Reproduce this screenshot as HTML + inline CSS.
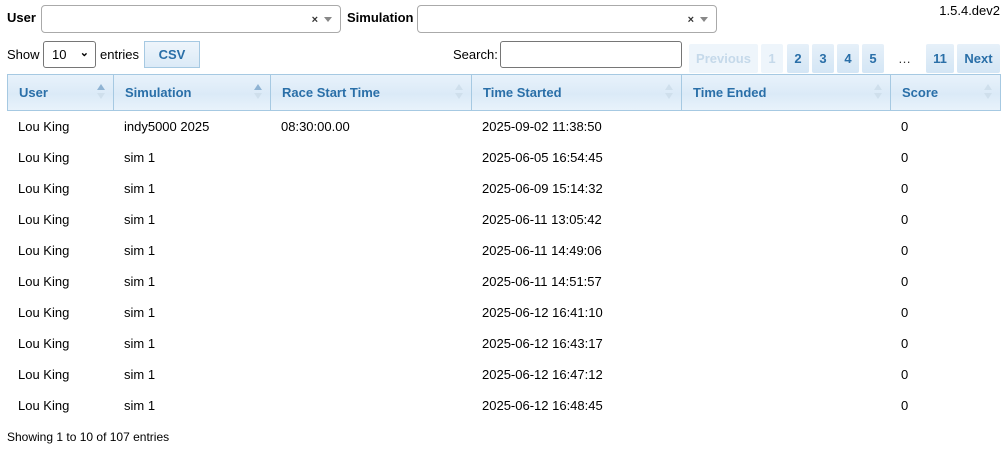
<!DOCTYPE html>
<html><head><style>
*{box-sizing:border-box}
body{margin:0;width:1006px;height:452px;background:#fff;font-family:"Liberation Sans",Arial,sans-serif;font-size:13px;color:#000;position:relative;overflow:hidden}
.a{position:absolute}
.lbl{font-weight:bold;font-size:13px}
.sel{border:1px solid #aaa;border-radius:4px;background:#fff;height:28px}
.sel .x{position:absolute;right:22px;top:8px;font-size:11px;font-weight:bold;color:#333}
.sel .ar{position:absolute;right:8px;top:11px;width:0;height:0;border-left:4px solid transparent;border-right:4px solid transparent;border-top:5px solid #888}
.btn{background:linear-gradient(#eef5fb,#dbeaf7);border:1px solid #a6c9e2;color:#2a6fa8;font-weight:bold;text-align:center}
.pg{background:linear-gradient(#e6f0f9,#d4e6f5);color:#2a6fa8;font-weight:bold;text-align:center;line-height:29px;height:29px;top:44px;border-radius:2px}
.pg.d{background:#eef5fb;color:#c5d9ea}
.hd{top:74px;height:37px;left:7px;width:994px;background:linear-gradient(#e8f2fb,#dbeaf7 55%,#e8f2fb);border:1px solid #a6c9e2}
.hc{position:absolute;top:0;height:35px;line-height:35px;padding-left:11px;font-weight:bold;color:#2a6fa8;border-right:1px solid #a6c9e2}
.hc:last-child{border-right:none}
.so{position:absolute;right:8px;top:9px;width:8px}
.so b{display:block;width:0;height:0;border-left:4px solid transparent;border-right:4px solid transparent;margin-bottom:3px}
.so .u{border-bottom:6px solid #cfdfec}
.so .dn{border-top:6px solid #cfdfec}
.so .u.on{border-bottom-color:#8fb3d3}
</style></head><body>
<div class="a lbl" style="left:7px;top:10px">User</div>
<div class="a sel" style="left:41px;top:5px;width:300px"><span class="x">×</span><span class="ar"></span></div>
<div class="a lbl" style="left:347px;top:10px">Simulation</div>
<div class="a sel" style="left:417px;top:5px;width:300px"><span class="x">×</span><span class="ar"></span></div>
<div class="a" style="right:6px;top:3px">1.5.4.dev2</div>

<div class="a" style="left:7px;top:47px">Show</div>
<div class="a" style="left:43px;top:41px;width:53px;height:27px;border:1px solid #767676;border-radius:3px;padding:5px 0 0 8px">10<span style="position:absolute;right:6px;top:4px;font-size:11px;font-weight:bold">&#8964;</span></div>
<div class="a" style="left:100px;top:47px">entries</div>
<div class="a btn" style="left:144px;top:41px;width:56px;height:27px;line-height:25px">CSV</div>
<div class="a" style="left:453px;top:47px">Search:</div>
<div class="a" style="left:500px;top:41px;width:182px;height:27px;border:1px solid #767676;border-radius:3px"></div>

<div class="a pg d" style="left:689px;width:69px">Previous</div>
<div class="a pg d" style="left:761px;width:22px">1</div>
<div class="a pg" style="left:787px;width:22px">2</div>
<div class="a pg" style="left:812px;width:22px">3</div>
<div class="a pg" style="left:837px;width:22px">4</div>
<div class="a pg" style="left:862px;width:22px">5</div>
<div class="a" style="left:898px;top:44px;line-height:29px;color:#333">…</div>
<div class="a pg" style="left:926px;width:28px">11</div>
<div class="a pg" style="left:957px;width:43px">Next</div>

<div class="a hd">
<div class="hc" style="left:0;width:106px">User<span class="so"><b class="u on"></b><b class="dn"></b></span></div>
<div class="hc" style="left:106px;width:157px">Simulation<span class="so"><b class="u on"></b><b class="dn"></b></span></div>
<div class="hc" style="left:263px;width:201px">Race Start Time<span class="so"><b class="u"></b><b class="dn"></b></span></div>
<div class="hc" style="left:464px;width:210px">Time Started<span class="so"><b class="u"></b><b class="dn"></b></span></div>
<div class="hc" style="left:674px;width:209px">Time Ended<span class="so"><b class="u"></b><b class="dn"></b></span></div>
<div class="hc" style="left:883px;width:109px">Score<span class="so"><b class="u"></b><b class="dn"></b></span></div>
</div>

<div class="row a" style="top:111px;left:0;width:1006px;height:31px;line-height:31px"><span class="a" style="left:18px">Lou King</span><span class="a" style="left:124px">indy5000 2025</span><span class="a" style="left:281px">08:30:00.00</span><span class="a" style="left:482px">2025-09-02 11:38:50</span><span class="a" style="left:901px">0</span></div>
<div class="row a" style="top:142px;left:0;width:1006px;height:31px;line-height:31px"><span class="a" style="left:18px">Lou King</span><span class="a" style="left:124px">sim 1</span><span class="a" style="left:482px">2025-06-05 16:54:45</span><span class="a" style="left:901px">0</span></div>
<div class="row a" style="top:173px;left:0;width:1006px;height:31px;line-height:31px"><span class="a" style="left:18px">Lou King</span><span class="a" style="left:124px">sim 1</span><span class="a" style="left:482px">2025-06-09 15:14:32</span><span class="a" style="left:901px">0</span></div>
<div class="row a" style="top:204px;left:0;width:1006px;height:31px;line-height:31px"><span class="a" style="left:18px">Lou King</span><span class="a" style="left:124px">sim 1</span><span class="a" style="left:482px">2025-06-11 13:05:42</span><span class="a" style="left:901px">0</span></div>
<div class="row a" style="top:235px;left:0;width:1006px;height:31px;line-height:31px"><span class="a" style="left:18px">Lou King</span><span class="a" style="left:124px">sim 1</span><span class="a" style="left:482px">2025-06-11 14:49:06</span><span class="a" style="left:901px">0</span></div>
<div class="row a" style="top:266px;left:0;width:1006px;height:31px;line-height:31px"><span class="a" style="left:18px">Lou King</span><span class="a" style="left:124px">sim 1</span><span class="a" style="left:482px">2025-06-11 14:51:57</span><span class="a" style="left:901px">0</span></div>
<div class="row a" style="top:297px;left:0;width:1006px;height:31px;line-height:31px"><span class="a" style="left:18px">Lou King</span><span class="a" style="left:124px">sim 1</span><span class="a" style="left:482px">2025-06-12 16:41:10</span><span class="a" style="left:901px">0</span></div>
<div class="row a" style="top:328px;left:0;width:1006px;height:31px;line-height:31px"><span class="a" style="left:18px">Lou King</span><span class="a" style="left:124px">sim 1</span><span class="a" style="left:482px">2025-06-12 16:43:17</span><span class="a" style="left:901px">0</span></div>
<div class="row a" style="top:359px;left:0;width:1006px;height:31px;line-height:31px"><span class="a" style="left:18px">Lou King</span><span class="a" style="left:124px">sim 1</span><span class="a" style="left:482px">2025-06-12 16:47:12</span><span class="a" style="left:901px">0</span></div>
<div class="row a" style="top:390px;left:0;width:1006px;height:31px;line-height:31px"><span class="a" style="left:18px">Lou King</span><span class="a" style="left:124px">sim 1</span><span class="a" style="left:482px">2025-06-12 16:48:45</span><span class="a" style="left:901px">0</span></div>

<div class="a" style="left:7px;top:430px;font-size:12px">Showing 1 to 10 of 107 entries</div>
</body></html>
